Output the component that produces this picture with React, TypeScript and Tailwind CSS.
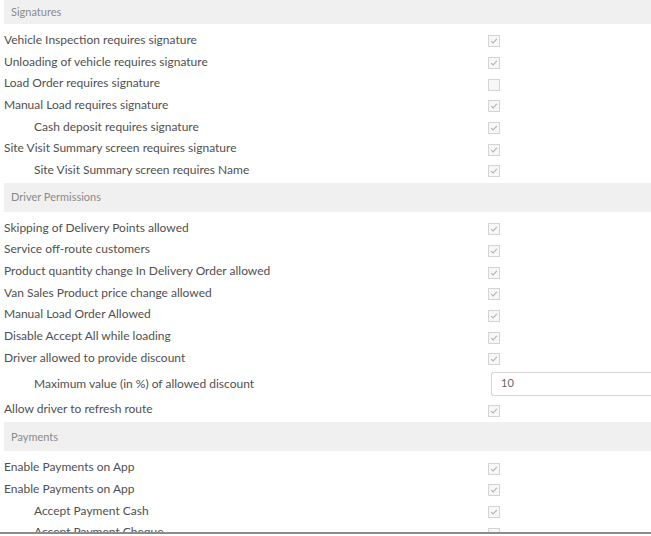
import React from "react";

type Row = { label: string; checked?: boolean; indent?: boolean; input?: string };
type Section = { title: string; rows: Row[] };

const sections: Section[] = [
  {
    title: "Signatures",
    rows: [
      { label: "Vehicle Inspection requires signature", checked: true },
      { label: "Unloading of vehicle requires signature", checked: true },
      { label: "Load Order requires signature", checked: false },
      { label: "Manual Load requires signature", checked: true },
      { label: "Cash deposit requires signature", checked: true, indent: true },
      { label: "Site Visit Summary screen requires signature", checked: true },
      { label: "Site Visit Summary screen requires Name", checked: true, indent: true },
    ],
  },
  {
    title: "Driver Permissions",
    rows: [
      { label: "Skipping of Delivery Points allowed", checked: true },
      { label: "Service off-route customers", checked: true },
      { label: "Product quantity change In Delivery Order allowed", checked: true },
      { label: "Van Sales Product price change allowed", checked: true },
      { label: "Manual Load Order Allowed", checked: true },
      { label: "Disable Accept All while loading", checked: true },
      { label: "Driver allowed to provide discount", checked: true },
      { label: "Maximum value (in %) of allowed discount", indent: true, input: "10" },
      { label: "Allow driver to refresh route", checked: true },
    ],
  },
  {
    title: "Payments",
    rows: [
      { label: "Enable Payments on App", checked: true },
      { label: "Enable Payments on App", checked: true },
      { label: "Accept Payment Cash", checked: true, indent: true },
      { label: "Accept Payment Cheque", checked: false, indent: true },
    ],
  },
];

function Checkbox({ checked }: { checked?: boolean }) {
  return (
    <span className="mt-[3px] flex h-[12px] w-[12px] items-center justify-center border border-[#d4d4d4] bg-[#f7f7f7]">
      {checked && (
        <svg width="8" height="8" viewBox="0 0 8 8" fill="none">
          <path d="M1.2 4.2 L3.1 6 L6.8 1.8" stroke="#b0b0b0" strokeWidth="1.1" />
        </svg>
      )}
    </span>
  );
}

export default function App() {
  return (
    <div
      className="h-[536px] w-[651px] overflow-hidden bg-white"
      style={{ fontFamily: "Lato, 'Noto Sans', sans-serif" }}
    >
      <div className="h-[534px] overflow-hidden border-b-2 border-[#8c8c8c]">
        {sections.map((section, i) => (
          <div key={section.title}>
            <div
              className={`mb-[5px] ml-[4px] flex items-center bg-[#f0f0f0] pl-[7px] text-[11px] text-[#8a8a8a] ${
                i === 0 ? "-mt-[6px] h-[30px] pt-[6px]" : "mt-[2px] h-[29px]"
              }`}
            >
              {section.title}
            </div>
            {section.rows.map((row, j) =>
              row.input ? (
                <div key={j} className="flex h-[30px] items-center">
                  <div className="w-[491px] pl-[34px] text-[12px] text-[#505050]">{row.label}</div>
                  <div className="flex h-[24px] flex-1 items-center rounded-l-[3px] border border-r-0 border-[#d6d6d6] pl-[9px] text-[11px] text-[#666]">
                    {row.input}
                  </div>
                </div>
              ) : (
                <div key={j} className="flex h-[21.7px] items-center">
                  <div
                    className={`w-[488px] text-[12px] text-[#505050] ${row.indent ? "pl-[34px]" : "pl-[4px]"}`}
                  >
                    {row.label}
                  </div>
                  <Checkbox checked={row.checked} />
                </div>
              )
            )}
          </div>
        ))}
      </div>
    </div>
  );
}
